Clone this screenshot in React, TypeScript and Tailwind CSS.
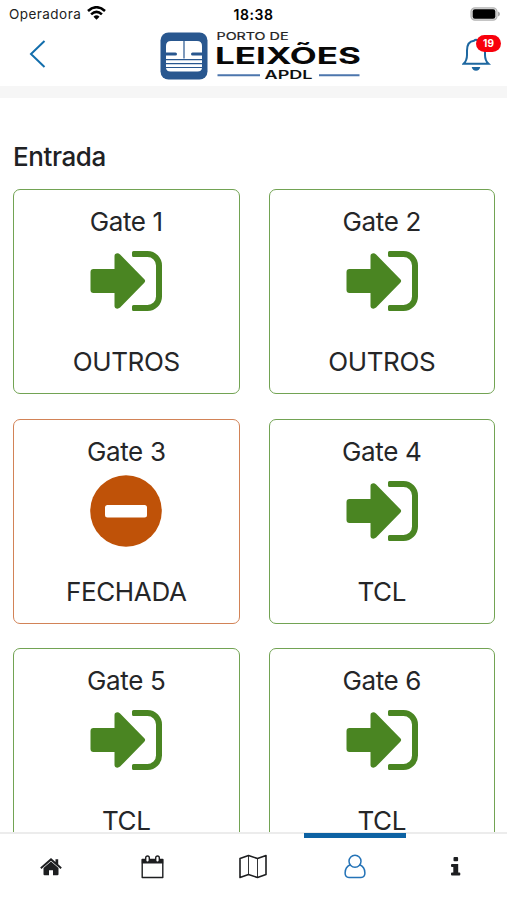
import React from "react";

type Gate = { name: string; status: string; open: boolean };

const gates: Gate[] = [
  { name: "Gate 1", status: "OUTROS", open: true },
  { name: "Gate 2", status: "OUTROS", open: true },
  { name: "Gate 3", status: "FECHADA", open: false },
  { name: "Gate 4", status: "TCL", open: true },
  { name: "Gate 5", status: "TCL", open: true },
  { name: "Gate 6", status: "TCL", open: true },
];

function EnterIcon() {
  return (
    <svg className="h-[72px] w-[72px] shrink-0" viewBox="0 0 72 72" fill="#4a8522">
      <path d="M0.5 21q0-3 3-3H24.5V5q0-1.200.8-1.900q2.200-1.700 4.800.3L54.300 28.300q1.700 1.700 0 3.400L30.100 56.600q-2.600 2-4.800.3q-.8-.7-.8-1.900V42H3.500q-3 0-3-3Z" />
      <path d="M43.500 0H57.500A14.500 14.500 0 0 1 72 14.500V45.500A14.500 14.500 0 0 1 57.500 60H43.500q-1.500 0-1.500-1.500v-3q0-1.500 1.500-1.500H57.500A8.500 8.500 0 0 0 66 45.500V14.500A8.500 8.500 0 0 0 57.500 6H43.500q-1.500 0-1.500-1.500v-3q0-1.500 1.500-1.500Z" />
    </svg>
  );
}

function ClosedIcon() {
  return (
    <svg className="h-[72px] w-[72px] shrink-0" viewBox="0 0 72 72">
      <circle cx="36" cy="36" r="35.800" fill="#bf5208" />
      <rect x="15" y="30" width="42" height="12.500" rx="2.500" fill="#fff" />
    </svg>
  );
}

function GateCard({ gate }: { gate: Gate }) {
  return (
    <div
      className={`flex h-[205px] flex-col items-center rounded-[7px] border pt-[14px] text-[26px] leading-[36px] tracking-[-0.35px] text-[#252628] ${
        gate.open ? "border-[#72a353]" : "border-[#d28357]"
      }`}
    >
      <span>{gate.name}</span>
      <div className={gate.open ? "mt-[11px] h-[93px]" : "mt-[5.5px] h-[98.5px]"}>
        {gate.open ? <EnterIcon /> : <ClosedIcon />}
      </div>
      <span>{gate.status}</span>
    </div>
  );
}

function StatusBar() {
  return (
    <div className="grid h-7 grid-cols-3 items-center text-[13.5px] text-[#222]">
      <div className="flex items-center gap-[6px] pl-[9px]">
        <span className="tracking-[0.45px]">Operadora</span>
        <svg className="h-[14px] w-[19px] -translate-y-px" viewBox="0 0 19 14" fill="none" stroke="#000" strokeWidth="2.600">
          <path d="M1 5Q9.500-2.500 18 5" />
          <path d="M4.100 8.400Q9.500 3.500 14.900 8.400" />
          <path d="M6.500 10.700Q9.500 8 12.500 10.700L9.500 13.800Z" fill="#000" stroke="none" />
        </svg>
      </div>
      <span className="text-center text-[14px] font-semibold tracking-[0.6px] text-black">18:38</span>
      <svg className="mr-[6px] h-[14px] w-[31px] justify-self-end" viewBox="0 0 31 14">
        <rect x="1" y=".8" width="26" height="12.400" rx="4" fill="#ddd" stroke="#b5b5b5" strokeWidth="1.200" />
        <rect x="2.700" y="2.300" width="22.600" height="9.400" rx="2.200" fill="#000" />
        <path d="M28 4.500q2 .6 2 2.500t-2 2.500Z" fill="#aaa" />
      </svg>
    </div>
  );
}

function Logo() {
  return (
    <svg className="h-[50px] w-[202px] overflow-visible" viewBox="0 0 202 50" fontFamily="Inter, sans-serif">
      <rect x=".5" y=".5" width="47" height="47" rx="8" fill="#29578f" />
      <path
        d="M11 9H37Q42 9 42 14V35.500Q42 39.500 37.500 39.500H10.500Q6 39.500 6 35.500V14Q6 9 11 9Z"
        fill="#fff"
      />
      <path d="M6 20.500H15.500Q17 20.500 17 22T15.500 23.500H6ZM42 20.500H32.500Q31 20.500 31 22T32.500 23.500H42Z" fill="#29578f" />
      <path
        d="M24 8.500V26.500M6 27.700H42M6 31.700H42M6 35.500H42"
        stroke="#29578f"
        strokeWidth="1.200"
        fill="none"
      />
      <text x="56.500" y="8.400" fontSize="10.500" fill="#222" stroke="#222" strokeWidth=".2" textLength="72" lengthAdjust="spacingAndGlyphs">PORTO DE</text>
      <text x="55" y="32" fontSize="23" fontWeight="700" fill="#080808" textLength="146" lengthAdjust="spacingAndGlyphs">LEIXÕES</text>
      <path d="M57.500 43.200H100M159 43.200H199.500" stroke="#4c76ad" strokeWidth="2" />
      <text x="104.500" y="47.300" fontSize="11.500" fontWeight="600" fill="#111" textLength="48" lengthAdjust="spacingAndGlyphs">APDL</text>
    </svg>
  );
}

function Header() {
  return (
    <header className="flex h-[58px] items-start">
      <button className="ml-[28px] mt-[11px] w-[62px]" aria-label="Voltar">
        <svg className="h-[30px] w-[20px]" viewBox="0 0 20 30" fill="none" stroke="#136eac" strokeWidth="2">
          <path d="M16.500 2L3 15L16.500 28" />
        </svg>
      </button>
      <div className="ml-[70px] mt-1">
        <Logo />
      </div>
      <button className="relative ml-auto mr-[15px] mt-[9px] h-[36px] w-[30px]" aria-label="Notificações">
        <svg className="h-[36px] w-[30px]" viewBox="0 0 30 36" fill="none" stroke="#1d67a0" strokeWidth="2">
          <path d="M1.600 26.800Q5 23.500 5 18V13.500Q5 4.300 12 3.700Q14 1.800 16 3.700Q23 4.300 23 13.500V18Q23 23.500 26.500 26.800Z" />
          <path d="M9.700 30H18.300Q17.500 33.700 14 33.700T9.700 30Z" fill="#1d67a0" stroke="none" />
        </svg>
        <span className="absolute -right-[9px] -top-[2px] flex h-[17px] w-[25px] items-center justify-center rounded-full bg-[#f8000c] text-[10px] font-bold text-white">
          19
        </span>
      </button>
    </header>
  );
}

function BottomNav() {
  return (
    <nav className="relative grid h-[68px] shrink-0 grid-cols-5 border-t-[2px] border-[#ececec] bg-white text-[#1d1e20]">
      <span className="absolute -top-[1px] left-[304px] h-[5px] w-[102px] bg-[#0d62a3]" />
      <div className="flex h-[65px] items-center justify-center pl-px">
        <svg className="h-[18px] w-[22px]" viewBox="0 0 22 18" fill="currentColor">
          <path d="M11 0L15.500 3.900V1.300H18.200V6.300L21.800 9.400L20.600 10.900L11 2.700L1.400 10.900L.2 9.400Z" />
          <path d="M11 3.600L18.500 10V16.200Q18.500 17.300 17.400 17.300H13V12.300H9V17.300H4.600Q3.500 17.300 3.500 16.200V10Z" />
        </svg>
      </div>
      <div className="flex h-[65px] items-center justify-center">
        <svg className="h-[24px] w-[23px]" viewBox="0 0 23 24" fill="none" stroke="currentColor" strokeWidth="1.400">
          <path d="M1.200 4.500H21.800V22.500H1.200Z" strokeLinejoin="round" />
          <path d="M.8 4.300H22.200V8.500H.8Z" fill="currentColor" stroke="none" />
          <rect x="4.700" y="1" width="3.600" height="6.200" rx="1.800" fill="#fff" />
          <rect x="14.700" y="1" width="3.600" height="6.200" rx="1.800" fill="#fff" />
        </svg>
      </div>
      <div className="flex h-[65px] items-center justify-center">
        <svg className="h-[25px] w-[28px]" viewBox="0 0 28 25" fill="none" stroke="currentColor" strokeWidth="1.600" strokeLinejoin="round">
          <path d="M1 4.500L9.500 1.500L18.500 4.500L27 1.500V20.500L18.500 23.500L9.500 20.500L1 23.500Z" />
          <path d="M9.500 1.500V20.500M18.500 4.500V23.500" strokeWidth=".9" />
        </svg>
      </div>
      <div className="flex h-[65px] items-center justify-center text-[#2473b7]">
        <svg className="h-[25px] w-[22px]" viewBox="0 0 22 25" fill="none" stroke="currentColor" strokeWidth="1.500">
          <circle cx="11" cy="7.200" r="6" />
          <path d="M6.200 10.800Q1.100 13 1.100 19Q1.100 23.400 5 23.400H17Q20.900 23.400 20.900 19Q20.900 13 15.800 10.800" />
        </svg>
      </div>
      <div className="flex h-[65px] items-center justify-center">
        <svg className="h-[19px] w-[10px]" viewBox="0 0 10 19" fill="currentColor">
          <rect x="2.500" y="0" width="4.600" height="4.200" rx=".9" />
          <path d="M1 7H7.200V15.500H8.300Q9.300 15.500 9.300 16.500V17.500Q9.300 18.500 8.300 18.500H1Q0 18.500 0 17.500V16.500Q0 15.500 1 15.500H2.300V10H1Q0 10 0 9V8Q0 7 1 7Z" />
        </svg>
      </div>
    </nav>
  );
}

export default function App() {
  return (
    <div className="flex h-[900px] w-[507px] flex-col overflow-hidden bg-white font-['Inter',sans-serif]">
      <StatusBar />
      <Header />
      <div className="h-3 shrink-0 bg-[#f6f6f6]" />
      <main className="min-h-0 flex-1 overflow-hidden px-[13px] pt-[41px]">
        <h1 className="h-[50px] text-[26px] font-medium leading-[36px] tracking-[-0.4px] text-[#202124]">Entrada</h1>
        <div className="grid grid-cols-[226.5px_226.5px] gap-x-[29px] gap-y-[24.5px]">
          {gates.map((gate) => (
            <GateCard key={gate.name} gate={gate} />
          ))}
        </div>
      </main>
      <BottomNav />
    </div>
  );
}
